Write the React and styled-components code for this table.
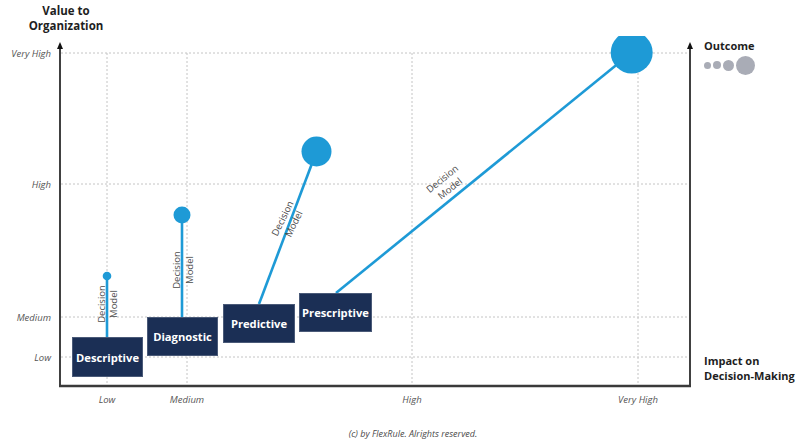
import React from 'react';
import styled, { createGlobalStyle } from 'styled-components';

const GlobalStyle = createGlobalStyle`
  html, body {
    margin: 0;
    padding: 0;
    background: #ffffff;
  }
  body {
    font-family: "Open Sans", "Noto Sans", Arial, sans-serif;
  }
`;

const BLUE = '#1e9ad6';
const NAVY = '#1b2f55';

// Chart data, in page coordinates
const GRID_Y = [
  { label: 'Very High', y: 53 },
  { label: 'High', y: 184 },
  { label: 'Medium', y: 317 },
  { label: 'Low', y: 357 },
];

const GRID_X = [
  { label: 'Low', x: 107 },
  { label: 'Medium', x: 187 },
  { label: 'High', x: 412 },
  { label: 'Very High', x: 638 },
];

const STAGES = [
  {
    name: 'Descriptive',
    box: { x: 72, y: 337, w: 71, h: 40 },
    from: [107, 337], to: [107, 276], r: 4.3,
    note: { x: 107.5, y: 304, angle: -90 },
  },
  {
    name: 'Diagnostic',
    box: { x: 147, y: 317, w: 71, h: 39 },
    from: [182, 317], to: [182, 215], r: 8.5,
    note: { x: 183, y: 270, angle: -90 },
  },
  {
    name: 'Predictive',
    box: { x: 223, y: 304, w: 72, h: 39 },
    from: [259, 304], to: [316.5, 151.5], r: 15,
    note: { x: 288, y: 221, angle: -64 },
  },
  {
    name: 'Prescriptive',
    box: { x: 299, y: 293, w: 73, h: 39 },
    from: [336, 293], to: [631.7, 52.5], r: 21,
    note: { x: 446, y: 183.5, angle: -39 },
  },
];

const CHART_TOP = 36;

const Page = styled.div`
  width: 800px;
  height: 447px;
  display: flex;
  flex-direction: column;
  overflow: hidden;
`;

const Header = styled.div`
  height: 36px;
  display: flex;
`;

const Title = styled.div`
  width: 132px;
  padding-top: 3px;
  text-align: center;
  font-size: 11.5px;
  line-height: 15px;
  font-weight: 700;
  color: #1e1e1e;
`;

const Main = styled.div`
  height: 380px;
  display: flex;
`;

const ChartWrap = styled.div`
  position: relative;
  width: 700px;
  height: 380px;
`;

const ChartSvg = styled.svg`
  display: block;
  width: 700px;
  height: 380px;
`;

const GridLine = styled.line`
  stroke: #c4c4c4;
  stroke-width: 1;
  stroke-dasharray: 2 2;
`;

const AxisLabel = styled.text`
  font-family: "Open Sans", "Noto Sans", Arial, sans-serif;
  font-size: 9.5px;
  font-style: italic;
  fill: #555555;
`;

const NoteText = styled.text`
  font-family: "Open Sans", "Noto Sans", Arial, sans-serif;
  font-size: 9.5px;
  fill: #4a4a4a;
`;

const StageBox = styled.div`
  position: absolute;
  left: ${p => p.$x}px;
  top: ${p => p.$y - CHART_TOP}px;
  width: ${p => p.$w}px;
  height: ${p => p.$h}px;
  box-sizing: border-box;
  background: ${NAVY};
  border: 1px solid #4a5a78;
  display: flex;
  align-items: center;
  justify-content: center;
  color: #ffffff;
  font-size: 11.2px;
  font-weight: 700;
  white-space: nowrap;
`;

const Aside = styled.div`
  flex: 1;
  display: flex;
  flex-direction: column;
  justify-content: space-between;
  padding: 3px 0 33px 4px;
`;

const Legend = styled.div`
  display: flex;
  flex-direction: column;
  gap: 2px;
`;

const SideTitle = styled.div`
  font-size: 11px;
  line-height: 14.5px;
  font-weight: 700;
  color: #1e1e1e;
`;

const DotRow = styled.div`
  display: flex;
  align-items: center;
  gap: 2px;
  height: 19px;
`;

const Dot = styled.span`
  display: block;
  width: ${p => p.$size}px;
  height: ${p => p.$size}px;
  border-radius: 50%;
  background: #a9acb6;
`;

const Footer = styled.div`
  flex: 1;
  padding: 12px 0 0 26px;
  text-align: center;
  font-size: 9px;
  line-height: 12px;
  font-style: italic;
  color: #4a4a4a;
`;

const DecisionNote = ({ x, y, angle }) => (
  <g transform={`translate(${x} ${y}) rotate(${angle})`}>
    <NoteText x="0" y="-6.2" textAnchor="middle" dominantBaseline="central">Decision</NoteText>
    <NoteText x="0" y="6.2" textAnchor="middle" dominantBaseline="central">Model</NoteText>
  </g>
);

const Chart = () => (
  <ChartWrap>
    <ChartSvg viewBox={`0 ${CHART_TOP} 700 380`}>
      {GRID_Y.map(g => (
        <GridLine key={g.label} x1="61" x2="689" y1={g.y} y2={g.y} />
      ))}
      {GRID_X.map(g => (
        <GridLine key={g.label} x1={g.x} x2={g.x} y1="53" y2="385" />
      ))}

      {/* axes */}
      <line x1="60" y1="386" x2="60" y2="47" stroke="#111" strokeWidth="1.6" />
      <polygon points="60,42 57,49 63,49" fill="#111" />
      <line x1="690" y1="386" x2="690" y2="47" stroke="#111" strokeWidth="1.6" />
      <polygon points="690,42 687,49 693,49" fill="#111" />
      <line x1="59" y1="386" x2="691" y2="386" stroke="#3a3a3a" strokeWidth="2.5" />

      {GRID_Y.map(g => (
        <AxisLabel key={g.label} x="51" y={g.y} textAnchor="end" dominantBaseline="central">
          {g.label}
        </AxisLabel>
      ))}
      {GRID_X.map(g => (
        <AxisLabel key={g.label} x={g.x} y="399" textAnchor="middle" dominantBaseline="central">
          {g.label}
        </AxisLabel>
      ))}

      {STAGES.map(s => (
        <g key={s.name}>
          <line
            x1={s.from[0]} y1={s.from[1]} x2={s.to[0]} y2={s.to[1]}
            stroke={BLUE} strokeWidth="2.6"
          />
          <circle cx={s.to[0]} cy={s.to[1]} r={s.r} fill={BLUE} />
          <DecisionNote {...s.note} />
        </g>
      ))}
    </ChartSvg>

    {STAGES.map(s => (
      <StageBox key={s.name} $x={s.box.x} $y={s.box.y} $w={s.box.w} $h={s.box.h}>
        {s.name}
      </StageBox>
    ))}
  </ChartWrap>
);

export default function App() {
  return (
    <Page>
      <GlobalStyle />
      <Header>
        <Title>Value to<br />Organization</Title>
      </Header>
      <Main>
        <Chart />
        <Aside>
          <Legend>
            <SideTitle>Outcome</SideTitle>
            <DotRow>
              <Dot $size={7} />
              <Dot $size={8} />
              <Dot $size={11} />
              <Dot $size={19} />
            </DotRow>
          </Legend>
          <SideTitle>Impact on<br />Decision-Making</SideTitle>
        </Aside>
      </Main>
      <Footer>(c) by FlexRule. Alrights reserved.</Footer>
    </Page>
  );
}
